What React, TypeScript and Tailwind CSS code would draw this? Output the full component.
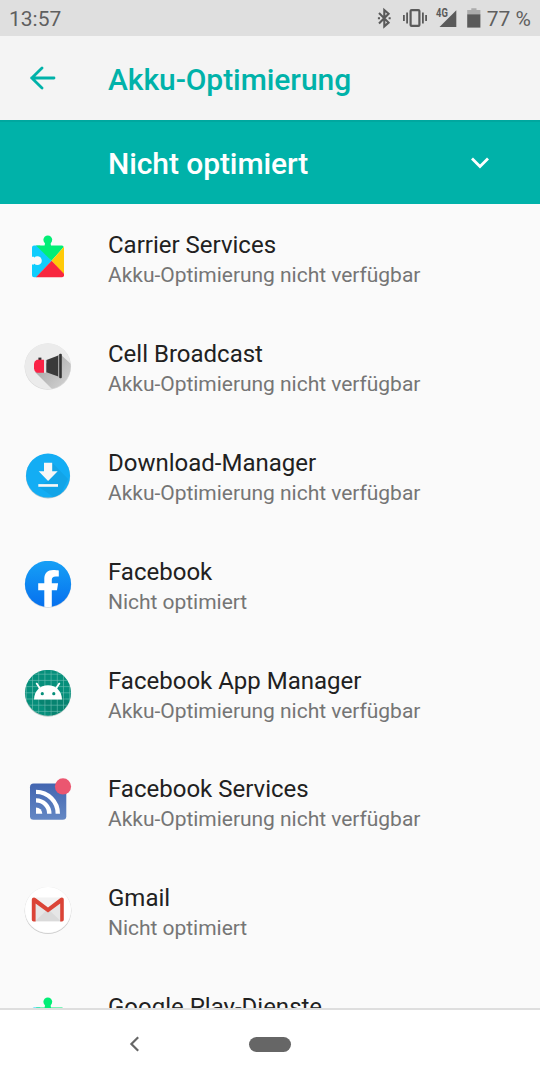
import React from 'react';

function PuzzleIcon() {
  return (
    <svg className="size-12 shrink-0" viewBox="0 0 48 48">
      <circle cx="23.8" cy="5.8" r="4.4" fill="#02ee76" />
      <path d="M21.2 8H26.4L27 12H20.6Z" fill="#02ee76" />
      <path d="M10 11.6H16L27.6 26.8L12.5 43.2H10A2 2 0 0 1 8 41.2V30.4H10V22.8H8V13.6A2 2 0 0 1 10 11.6Z" fill="#0fcdfd" />
      <path d="M12 11.6H38A2 2 0 0 1 39.7 13L27.6 26.8Z" fill="#02ee76" />
      <path d="M39.7 13Q40 13.4 40 14V40.5L27.6 26.8Z" fill="#ffca08" />
      <path d="M27.6 26.8L40 39.8V41.2A2 2 0 0 1 38 43.2H12Z" fill="#f8273f" />
      <circle cx="13.4" cy="26.7" r="4.4" fill="#fafafa" />
      <path d="M7 24H11V29.4H7Z" fill="#fafafa" />
    </svg>
  );
}

function BroadcastIcon() {
  return (
    <svg className="size-12 shrink-0" viewBox="0 0 48 48">
      <defs>
        <linearGradient id="castShadow" x1="14" y1="20" x2="40" y2="44" gradientUnits="userSpaceOnUse">
          <stop stopColor="#a8a8a8" />
          <stop offset="1" stopColor="#d0d0d0" />
        </linearGradient>
        <clipPath id="castClip">
          <circle cx="23.8" cy="23.2" r="23" />
        </clipPath>
      </defs>
      <circle cx="23.8" cy="23.6" r="23.2" fill="#d6d6d6" />
      <circle cx="23.8" cy="23.2" r="23" fill="#ebebeb" />
      <g clipPath="url(#castClip)">
        <path d="M11 29L20 22L36 11L60 33V60H42Z" fill="url(#castShadow)" />
      </g>
      <path d="M14.4 14.6H17.4V17H14.4Z" fill="#333" />
      <path d="M12.8 16.8H20V29.8H12.8Q10 28.4 10 25.5V21Q10 18.2 12.8 16.8Z" fill="#fa2346" />
      <path d="M20 17H22V29.8H20Z" fill="#e4e4e4" />
      <path d="M22.4 17L34.3 12.6V33.4L22.4 29.2Z" fill="#3a3a3a" />
      <path d="M34.3 12H35.4V34H34.3Z" fill="#a9a9a9" />
      <rect x="35.2" y="10.8" width="2.6" height="24.4" rx="1" fill="#333" />
    </svg>
  );
}

function DownloadIcon() {
  return (
    <svg className="size-12 shrink-0" viewBox="0 0 48 48">
      <defs>
        <clipPath id="dlClip">
          <circle cx="24" cy="23.6" r="22" />
        </clipPath>
      </defs>
      <circle cx="24" cy="24.3" r="22.1" fill="#a9c3cf" />
      <circle cx="24" cy="23.6" r="22" fill="#13adf4" />
      <path d="M28.3 10.7L44 27L34 48L14.5 34.7L24 29Z" fill="#12a4e7" clipPath="url(#dlClip)" />
      <path d="M20 10.8H28.2V19.3H33.7L24.1 29L14.7 19.3H20Z" fill="#f7f7f7" />
      <path d="M14.3 32.1H34V34.8H14.3Z" fill="#f7f7f7" />
    </svg>
  );
}

function FacebookIcon() {
  return (
    <svg className="size-12 shrink-0" viewBox="0 0 48 48">
      <defs>
        <linearGradient id="fbFill" x1="0" y1="0" x2="0" y2="1">
          <stop stopColor="#16a0f6" />
          <stop offset="1" stopColor="#0670ee" />
        </linearGradient>
      </defs>
      <circle cx="24" cy="23.6" r="23.2" fill="#ccd4dc" />
      <circle cx="24" cy="22.9" r="23.1" fill="url(#fbFill)" />
      <path d="M20.3 45.7V29.3H14.2V22.3H20.3V17.6C20.3 11.8 23.7 8.9 29.2 8.9C31.6 8.9 33.4 9.1 34.8 9.4V15.4H31.8C28.8 15.4 27.8 16.8 27.8 18.8V22.3H34.1L33 29.3H27.8V45.7Q24 46.3 20.3 45.7Z" fill="#fff" />
    </svg>
  );
}

function AndroidIcon() {
  return (
    <svg className="size-12 shrink-0" viewBox="0 0 48 48">
      <defs>
        <clipPath id="droidClip">
          <circle cx="24" cy="22.8" r="23" />
        </clipPath>
      </defs>
      <circle cx="24" cy="23.6" r="23.1" fill="#b9c8c5" />
      <circle cx="24" cy="22.8" r="23" fill="#068f7b" />
      <g clipPath="url(#droidClip)">
        <path d="M38 25L52 39V50H32L13 29.4Z" fill="#078370" />
        <path
          d="M2.3 0V46M8.5 0V46M14.7 0V46M20.9 0V46M27.1 0V46M33.3 0V46M39.5 0V46M45.7 0V46M0 4.2H48M0 10.4H48M0 16.6H48M0 22.8H48M0 29H48M0 35.2H48M0 41.4H48"
          stroke="#6fc0b3"
          strokeWidth="0.6"
        />
      </g>
      <path d="M10 29.4C10.3 21 16 15.3 24 15.3C32 15.3 37.7 21 38 29.4Z" fill="#fff" />
      <path d="M12.7 13.6L16 18.6M35.3 13.6L32 18.6" stroke="#fff" strokeWidth="1.8" strokeLinecap="round" />
      <circle cx="18.3" cy="23.7" r="1.6" fill="#068f7b" />
      <circle cx="29.8" cy="23.7" r="1.6" fill="#068f7b" />
    </svg>
  );
}

function ServicesIcon() {
  return (
    <svg className="size-12 shrink-0 overflow-visible" viewBox="0 0 48 48">
      <defs>
        <linearGradient id="rssFill" x1="0" y1="0" x2="0" y2="1">
          <stop stopColor="#4265b0" />
          <stop offset="1" stopColor="#6488c4" />
        </linearGradient>
      </defs>
      <rect x="6" y="5.6" width="36.3" height="36.2" rx="3.6" fill="url(#rssFill)" />
      <path d="M12 13.9A21.8 21.8 0 0 1 33.8 35.7M12 22.4A13.3 13.3 0 0 1 25.3 35.7" fill="none" stroke="#fff" strokeWidth="4.4" />
      <path d="M12 29.4A6.3 6.3 0 0 1 18.3 35.7H12Z" fill="#fff" />
      <circle cx="39" cy="8.4" r="8.1" fill="#eb5670" />
    </svg>
  );
}

function GmailIcon() {
  return (
    <svg className="size-12 shrink-0" viewBox="0 0 48 48">
      <circle cx="24" cy="23.7" r="23.4" fill="#c9c9c9" />
      <circle cx="24" cy="23" r="23.3" fill="#efefef" />
      <circle cx="24" cy="22.9" r="22.9" fill="#fff" />
      <path d="M10 10.8H38V34.3H10Z" fill="#e6e6e6" />
      <path d="M11 34.3L24 22L37 34.3Z" fill="#dadada" />
      <path d="M11 10.8H37L24 21Z" fill="#f2f2f2" />
      <path d="M7.8 12.6Q7.8 10.6 10 10.6L11.4 11L24 20.6L36.4 11L37.8 10.6Q39.8 10.6 39.8 12.6V32.8Q39.8 34.5 38 34.5H36.2V16.4L24 25.5L11.6 16.4V34.5H9.6Q7.8 34.5 7.8 32.8Z" fill="#db4437" />
    </svg>
  );
}

const unavailable = 'Akku-Optimierung nicht verfügbar';

const apps = [
  { name: 'Carrier Services', status: unavailable, icon: PuzzleIcon },
  { name: 'Cell Broadcast', status: unavailable, icon: BroadcastIcon },
  { name: 'Download-Manager', status: unavailable, icon: DownloadIcon },
  { name: 'Facebook', status: 'Nicht optimiert', icon: FacebookIcon },
  { name: 'Facebook App Manager', status: unavailable, icon: AndroidIcon },
  { name: 'Facebook Services', status: unavailable, icon: ServicesIcon },
  { name: 'Gmail', status: 'Nicht optimiert', icon: GmailIcon },
  { name: 'Google Play-Dienste', status: unavailable, icon: PuzzleIcon },
];

function StatusBar() {
  return (
    <div className="flex h-9 shrink-0 items-center justify-between bg-[#dfdfdf] px-[9px] text-[21px] text-[#5f5f5f]">
      <span className="pt-1">13:57</span>
      <div className="flex items-center">
        <svg className="h-9 w-[110px]" viewBox="0 0 110 36" fill="none" stroke="#5a5a5a">
          <path d="M3 13L12.6 22.6L8.3 26.4V10L12.6 13.8L3 23.4" strokeWidth="2.1" />
          <path d="M1.9 18.2H4M12.6 18.2H14.7" strokeWidth="2" />
          <rect x="34.6" y="10.1" width="8.8" height="15.8" rx="1" strokeWidth="2.2" />
          <path d="M27.9 15V21M31.1 12.6V23.4M46.9 12.6V23.4M50.1 15V21" strokeWidth="1.8" />
          <path d="M80.3 10.2V27H63.5Z" fill="#5a5a5a" stroke="none" />
          <path d="M91.2 10H95.3V8.3H100.5V10H104.4V14.5H91.2Z" fill="#acacac" stroke="none" />
          <path d="M91.2 14.3H104.4V27.6H91.2Z" fill="#5a5a5a" stroke="none" />
          <text x="60" y="17.2" fill="#5a5a5a" stroke="none" className="text-[12px] font-bold" textLength="11.8" lengthAdjust="spacingAndGlyphs">4G</text>
        </svg>
        <span className="ml-px pt-1">77 %</span>
      </div>
    </div>
  );
}

export default function App() {
  return (
    <div className="flex h-[1080px] w-[540px] flex-col overflow-hidden bg-[#fafafa] font-['Roboto',sans-serif]">
      <StatusBar />

      <header className="flex h-21 shrink-0 items-center bg-[#f4f4f4] pl-[30px] text-[#00b2a9]">
        <svg className="h-6 w-[26px] shrink-0" viewBox="0 0 26 24" fill="none" stroke="currentColor" strokeWidth="2.8" strokeLinecap="round" strokeLinejoin="round">
          <path d="M24 12H1.6M12 2L1.8 12L12 22" />
        </svg>
        <h1 className="ml-[52px] pt-1 text-[30px] leading-9 font-medium tracking-[-0.06px]">Akku-Optimierung</h1>
      </header>

      <div className="flex h-21 shrink-0 items-center justify-between border-t-2 border-[#00a79f] bg-[#00b2a9] pr-[50px] pl-[108px] text-white">
        <span className="pt-0.5 text-[30px] leading-9 font-medium tracking-[-0.08px]">Nicht optimiert</span>
        <svg className="h-5 w-5" viewBox="0 0 20 20" fill="none" stroke="currentColor" strokeWidth="2.8">
          <path d="M2 5.5L10 13.5L18 5.5" />
        </svg>
      </div>

      <main className="min-h-0 flex-1 overflow-hidden">
        {apps.map(({ name, status, icon: Icon }) => (
          <div key={name} className="flex h-[108.8px] items-center gap-9 pl-6">
            <Icon />
            <div className="pt-0.5">
              <div className="text-2xl leading-8 text-[#212121]">{name}</div>
              <div className="text-[21px] leading-7 tracking-[-0.03px] text-[#757575]">{status}</div>
            </div>
          </div>
        ))}
      </main>

      <nav className="flex h-18 shrink-0 items-center border-t-2 border-[#dedede] bg-white pb-0.5 pl-[129px]">
        <svg className="h-4 w-3" viewBox="0 0 12 16" fill="none" stroke="#666" strokeWidth="2.2">
          <path d="M9.2 1.2L2.4 8L9.2 14.8" />
        </svg>
        <div className="ml-27 h-[15px] w-[42px] rounded-full bg-[#666]" />
      </nav>
    </div>
  );
}
